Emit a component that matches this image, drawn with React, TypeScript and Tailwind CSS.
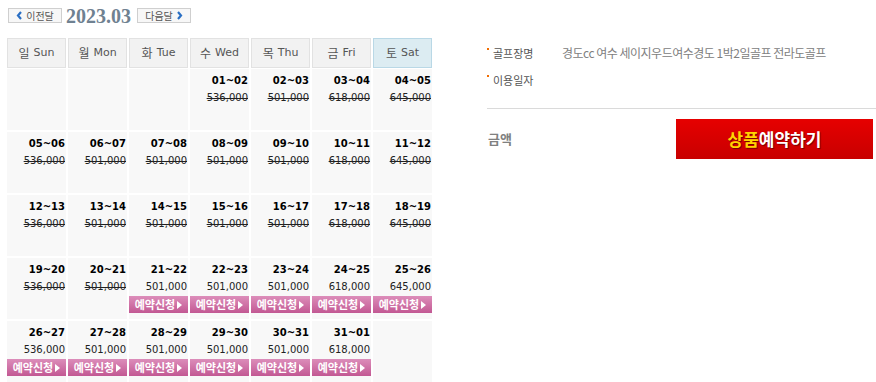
import React from "react";

type Cell = { d: string; p: string; ok: boolean } | null;

const P = ["536,000", "501,000", "501,000", "501,000", "501,000", "618,000", "645,000"];
const pad = (n: number) => (n < 10 ? "0" + n : "" + n);

function buildRows(): Cell[][] {
  const cells: Cell[] = [null, null, null];
  for (let day = 1; day <= 31; day++) {
    const idx = cells.length % 7;
    const next = day === 31 ? 1 : day + 1;
    cells.push({ d: `${pad(day)}~${pad(next)}`, p: day === 1 ? "536,000" : P[idx], ok: day >= 21 });
  }
  cells.push(null);
  const rows: Cell[][] = [];
  for (let i = 0; i < cells.length; i += 7) rows.push(cells.slice(i, i + 7));
  return rows;
}

const days = [
  ["일", "Sun"],
  ["월", "Mon"],
  ["화", "Tue"],
  ["수", "Wed"],
  ["목", "Thu"],
  ["금", "Fri"],
  ["토", "Sat"],
];

const kr = { fontFamily: '"Noto Sans CJK KR", "Noto Sans", sans-serif' };
const num = { fontFamily: '"DejaVu Sans", Verdana, sans-serif' };

export default function App() {
  const rows = buildRows();
  return (
    <div className="w-[876px] h-[382px] bg-white overflow-hidden flex">
      <div className="pl-[7px] w-[440px] shrink-0">
        <div className="flex items-center h-[31px]">
          <button
            className="ml-[1px] h-[15px] w-[54px] border border-[#cfcfcf] bg-[#f7f7f7] flex items-center justify-center gap-[3px] text-[10px] text-[#555] leading-none"
            style={kr}
          >
            <svg width="7" height="9" viewBox="0 0 7 9"><path d="M5 1 L2 4.5 L5 8" stroke="#2a6fc4" strokeWidth="2.2" fill="none" /></svg>
            이전달
          </button>
          <span
            className="ml-[4px] text-[20px] font-bold text-[#6f8191] leading-none"
            style={{ fontFamily: '"Liberation Serif", "Times New Roman", serif' }}
          >
            2023.03
          </span>
          <button
            className="ml-[6px] h-[15px] w-[54px] border border-[#cfcfcf] bg-[#f7f7f7] flex items-center justify-center gap-[3px] text-[10px] text-[#555] leading-none"
            style={kr}
          >
            다음달
            <svg width="7" height="9" viewBox="0 0 7 9"><path d="M2 1 L5 4.5 L2 8" stroke="#2a6fc4" strokeWidth="2.2" fill="none" /></svg>
          </button>
        </div>
        <div className="mt-[7px] grid grid-cols-[repeat(7,59px)] gap-[2px]">
          {days.map(([k, e], i) => (
            <div
              key={e}
              className={`h-[30px] flex items-center justify-center gap-[4px] text-[12px] text-[#555] border ${
                i === 6 ? "bg-[#dcecf2] border-[#b9d8e6]" : "bg-[#f2f2f2] border-[#e2e2e2]"
              }`}
            >
              <span style={kr}>{k}</span>
              <span style={num} className="text-[11px]">{e}</span>
            </div>
          ))}
        </div>
        <div className="mt-[1px] grid grid-cols-[repeat(7,59px)] gap-x-[2px] gap-y-[2px]">
          {rows.flat().map((c, i) => (
            <div key={i} className="h-[61px] bg-[#f8f8f8] flex flex-col items-end pt-[5px]">
              {c && (
                <>
                  <div className="text-[10px] font-bold text-black leading-[14px] pr-[1px]" style={num}>
                    {c.d}
                  </div>
                  <div
                    className={`text-[10px] text-[#222] leading-[14px] pr-[1px] mt-[3px] ${c.ok ? "" : "line-through"}`}
                    style={num}
                  >
                    {c.p}
                  </div>
                  {c.ok && (
                    <div
                      className="mt-[2px] w-full h-[17px] bg-gradient-to-b from-[#dc8dba] to-[#c25893] flex items-center justify-center gap-[2px] text-white text-[11px] font-bold leading-none"
                      style={kr}
                    >
                      예약신청
                      <svg width="5" height="8" viewBox="0 0 5 8"><path d="M0 0 L5 4 L0 8 Z" fill="#fff" /></svg>
                    </div>
                  )}
                </>
              )}
            </div>
          ))}
        </div>
      </div>
      <div className="ml-[47px] flex-1 pt-[44px]" style={kr}>
        <div className="flex items-center h-[18px] text-[11px]">
          <span className="w-[2px] h-[2px] bg-[#f26d00] self-start mt-[4px] mr-[4px]" />
          <span className="text-[#555] w-[69px]">골프장명</span>
          <span className="text-[12px] text-[#808080] tracking-[-0.5px]">경도cc 여수 세이지우드여수경도 1박2일골프 전라도골프</span>
        </div>
        <div className="mt-[9px] flex items-center h-[18px] text-[11px]">
          <span className="w-[2px] h-[2px] bg-[#f26d00] self-start mt-[4px] mr-[4px]" />
          <span className="text-[#555]">이용일자</span>
        </div>
        <div className="mt-[19px] h-[1px] bg-[#dadada]" />
        <div className="mt-[10px] flex items-center">
          <span className="ml-[1px] text-[13px] text-[#808080] font-bold">금액</span>
          <div className="ml-auto mr-[3px] w-[197px] h-[40px] bg-gradient-to-b from-[#e60000] to-[#c80000] flex items-center justify-center text-[17px] font-bold [text-shadow:1px_1px_1px_rgba(0,0,0,0.45)]">
            <span className="text-[#ffd400]">상품</span>
            <span className="text-white">예약하기</span>
          </div>
        </div>
      </div>
    </div>
  );
}
